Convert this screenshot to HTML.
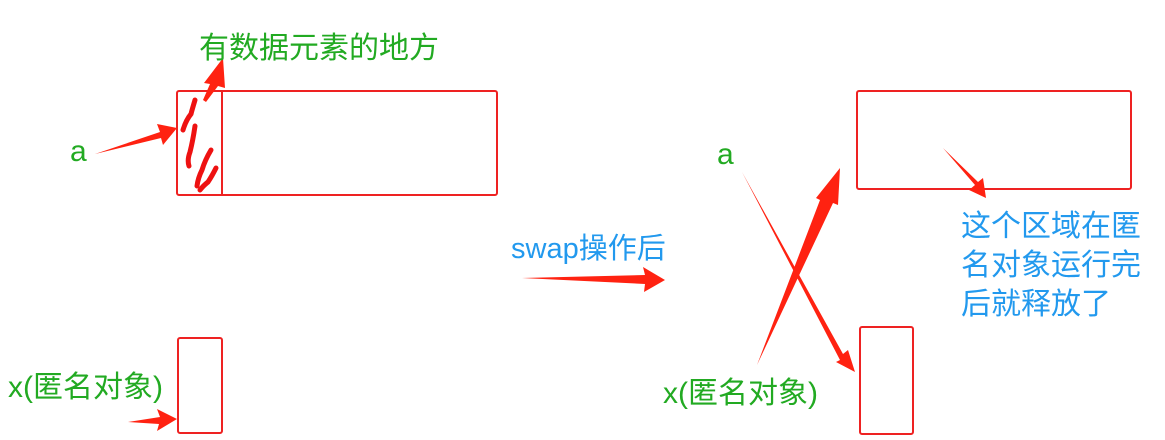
<!DOCTYPE html>
<html><head><meta charset="utf-8"><style>
html,body{margin:0;padding:0;background:#fff;width:1165px;height:440px;overflow:hidden}
svg{display:block}
text{font-family:"Liberation Sans","Noto Sans CJK SC",sans-serif}
.g{fill:#22aa22}.b{fill:#2299ee}
</style></head><body>
<svg width="1165" height="440" viewBox="0 0 1165 440">
<g fill="none" stroke="#ee2222" stroke-width="2">
<rect x="177" y="91" width="320" height="104" rx="2"/>
<line x1="222" y1="91" x2="222" y2="195"/>
<rect x="178" y="338" width="44" height="95" rx="2"/>
<rect x="857" y="91" width="274" height="98" rx="2"/>
<rect x="860" y="327" width="53" height="107" rx="2"/>
</g>
<g fill="none" stroke="#ee1111" stroke-width="5" stroke-linecap="round">
<path d="M195 100 Q192 110 191 114 Q186 120 183 130"/>
<path d="M195 126 Q193 140 190 152 Q187 160 189 166"/>
<path d="M211 150 Q205 160 202 170 Q198 178 197 186"/>
<path d="M216 168 Q212 176 208 182 Q203 186 200 190"/>
</g>
<g fill="#ff2211">
<polygon points="95,154 160,132 157,124 177,128 163,145 161,138"/>
<polygon points="203,100 210,84 204,83 223,58 225,88 218,86 206,102"/>
<polygon points="128,422 160,417 157,409 177,419 157,431 159,424"/>
<polygon points="522,278 645,275 643,267 665,280 644,292 645,284"/>
<polygon points="742,172 843,354 848,350 855,372 836,362 840,360"/>
<polygon points="757,365 820,200 816,198 840,168 838,205 833,203"/>
<polygon points="943,148 975,185 969,190 986,198 983,178 978,182"/>
</g>
<text x="199" y="58" class="g" font-size="30">有数据元素的地方</text>
<text x="70" y="161" class="g" font-size="30">a</text>
<text x="8" y="397" class="g" font-size="30">x(匿名对象)</text>
<text x="511" y="258" class="b" font-size="29">swap操作后</text>
<text x="717" y="164" class="g" font-size="30">a</text>
<text x="663" y="403" class="g" font-size="30">x(匿名对象)</text>
<text x="961" y="236" class="b" font-size="30">这个区域在匿</text>
<text x="961" y="275" class="b" font-size="30">名对象运行完</text>
<text x="961" y="314" class="b" font-size="30">后就释放了</text>
</svg>
</body></html>
